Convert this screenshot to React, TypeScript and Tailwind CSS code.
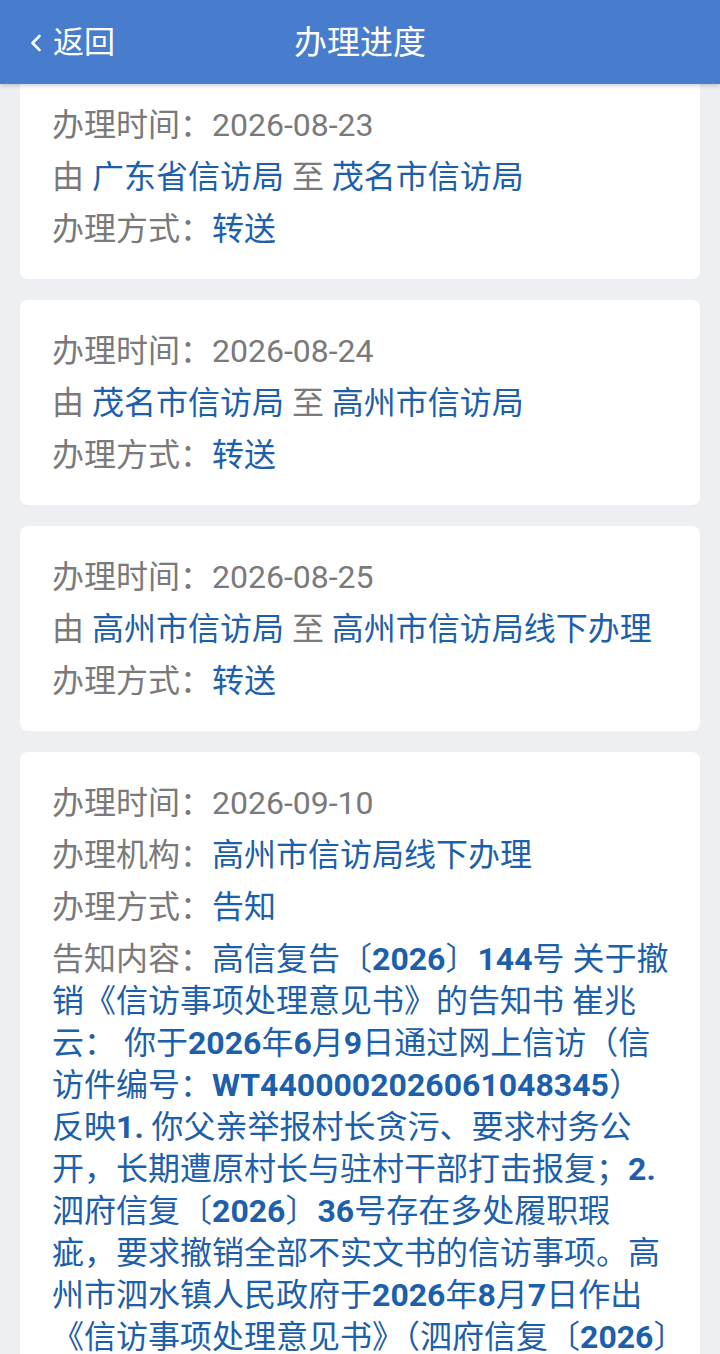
import type { ReactNode } from 'react'

const FONT = { fontFamily: 'Roboto, "Noto Sans CJK SC", sans-serif' }

type Step = { time: string; from: string; to: string; way: string }

const steps: Step[] = [
  { time: '2026-08-24', from: '茂名市信访局', to: '高州市信访局', way: '转送' },
  { time: '2026-08-25', from: '高州市信访局', to: '高州市信访局线下办理', way: '转送' },
]

const notice = [
  '高信复告〔2026〕144号 关于撤',
  '销《信访事项处理意见书》的告知书 崔兆',
  '云： 你于2026年6月9日通过网上信访（信',
  '访件编号：WT4400002026061048345）',
  '反映1. 你父亲举报村长贪污、要求村务公',
  '开，长期遭原村长与驻村干部打击报复；2.',
  '泗府信复〔2026〕36号存在多处履职瑕',
  '疵，要求撤销全部不实文书的信访事项。高',
  '州市泗水镇人民政府于2026年8月7日作出',
  '《信访事项处理意见书》（泗府信复〔2026〕',
]

// digits / latin come out bold in the app's body text
function boldNums(text: string): ReactNode[] {
  return text.split(/([A-Z0-9]+\.?)/).map((part, i) =>
    /^[A-Z0-9]/.test(part) ? <b key={i} className="font-bold">{part}</b> : <span key={i}>{part}</span>
  )
}

function Line({ children }: { children: ReactNode }) {
  return <div className="leading-[42px] whitespace-nowrap">{children}</div>
}

function Label({ children }: { children: ReactNode }) {
  return <span className="text-[#7a7a7a]">{children}</span>
}

function Value({ children }: { children: ReactNode }) {
  return <span className="text-[#1c60ab]">{children}</span>
}

function StepCard({ step, cut }: { step: Step; cut?: boolean }) {
  return (
    <div className={`bg-white mx-5 px-8 pb-[29px] flex flex-col gap-[10px] ${cut ? 'pt-[20px] rounded-b-lg' : 'pt-[30px] rounded-lg'}`}>
      <Line><Label>办理时间：{step.time}</Label></Line>
      <Line>
        <Label>由 </Label><Value>{step.from}</Value><Label> 至 </Label><Value>{step.to}</Value>
      </Line>
      <Line><Label>办理方式：</Label><Value>{step.way}</Value></Line>
    </div>
  )
}

export default function App() {
  return (
    <div className="h-[1354px] w-[720px] overflow-hidden flex flex-col bg-[#eeeff3]" style={FONT}>
      <header className="relative z-10 h-[84px] shrink-0 bg-[#477dcc] shadow-[0_2px_4px_rgba(0,0,0,0.18)] flex items-center text-white">
        <div className="flex items-center pl-[29px] w-[200px]">
          <svg width="14" height="22" viewBox="0 0 14 22" fill="none" className="mr-[10px] mt-[2px]">
            <path d="M10.5 4 L3.5 11 L10.5 18" stroke="white" strokeWidth="2.6" strokeLinecap="round" strokeLinejoin="round" />
          </svg>
          <span className="text-[31px] leading-none">返回</span>
        </div>
        <h1 className="absolute left-0 right-0 text-center text-[33px] leading-none font-normal pointer-events-none">办理进度</h1>
      </header>

      <main className="flex-1 flex flex-col gap-[21px] text-[32px]">
        <StepCard cut step={{ time: '2026-08-23', from: '广东省信访局', to: '茂名市信访局', way: '转送' }} />
        {steps.map((s) => (
          <StepCard key={s.time} step={s} />
        ))}

        <div className="bg-white mx-5 px-8 pt-[30px] pb-[29px] rounded-lg flex flex-col gap-[10px]">
          <Line><Label>办理时间：2026-09-10</Label></Line>
          <Line><Label>办理机构：</Label><Value>高州市信访局线下办理</Value></Line>
          <Line><Label>办理方式：</Label><Value>告知</Value></Line>
          <div>
            {notice.map((text, i) => (
              <Line key={i}>
                {i === 0 && <Label>告知内容：</Label>}
                <Value>{boldNums(text)}</Value>
              </Line>
            ))}
          </div>
        </div>
      </main>
    </div>
  )
}
